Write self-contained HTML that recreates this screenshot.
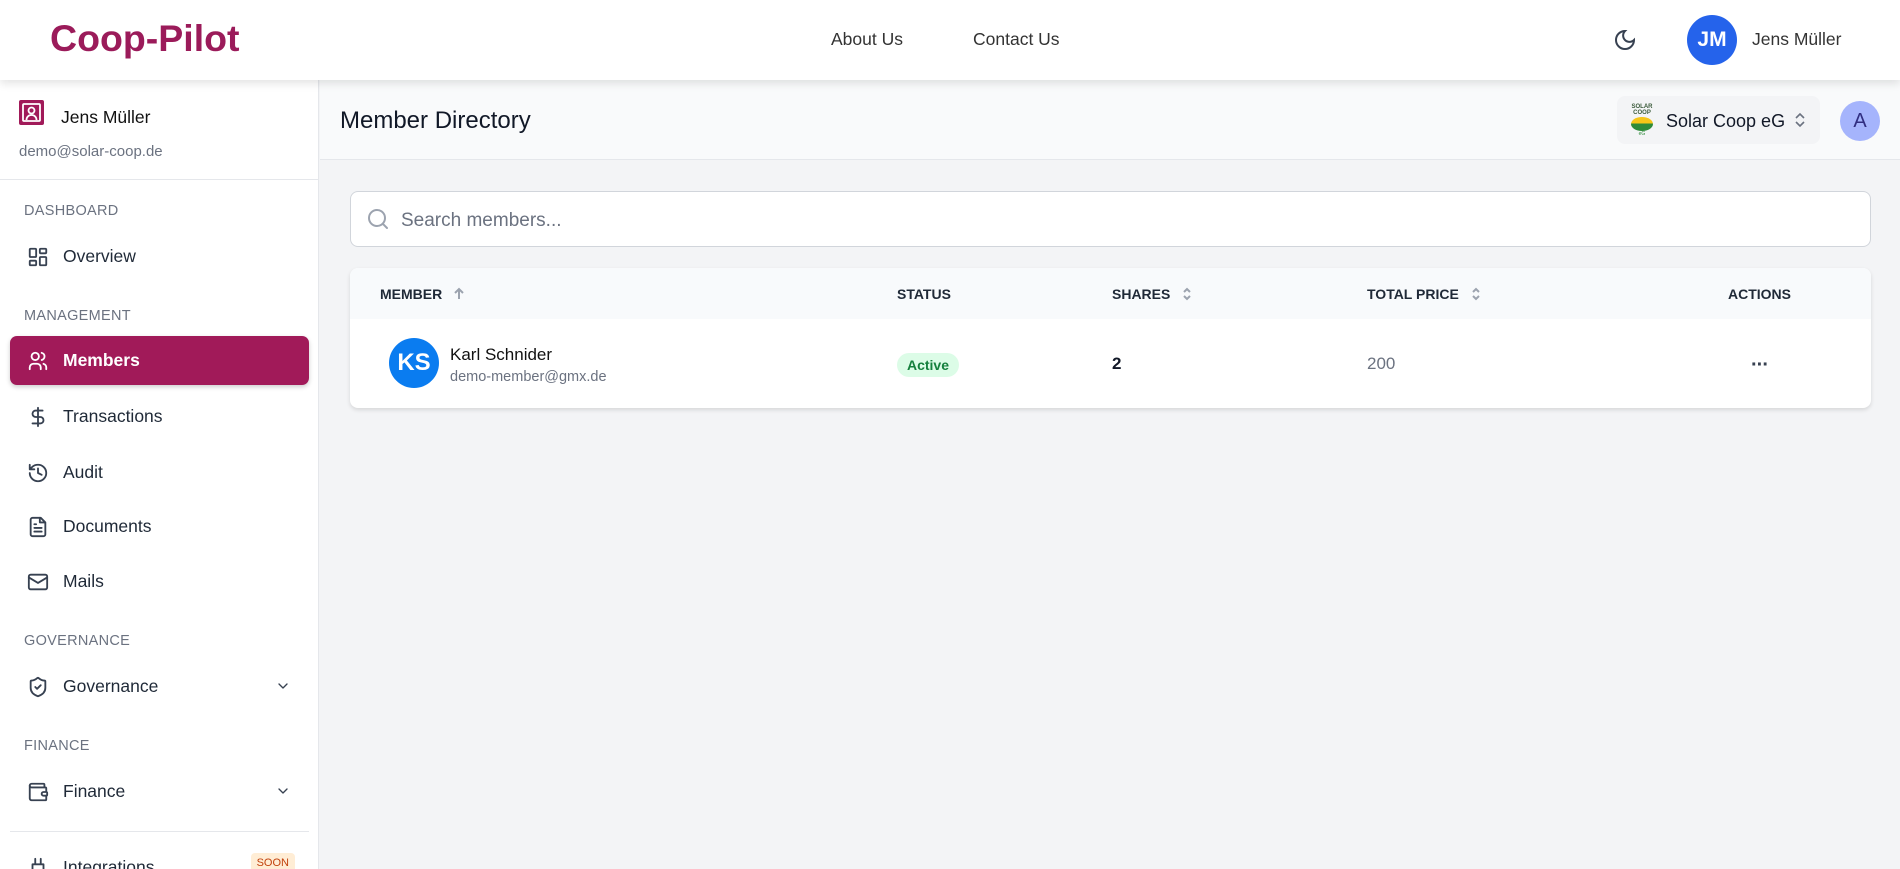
<!DOCTYPE html>
<html><head><meta charset="utf-8"><style>
*{box-sizing:border-box;margin:0;padding:0}
html{width:1900px;height:869px;overflow:hidden}
body{width:1900px;height:869px;overflow:hidden;background:#f3f4f6;font-family:"Liberation Sans",sans-serif;color:#111827;position:relative}
.hdr{position:absolute;left:0;top:0;width:1900px;height:80px;background:#fff;box-shadow:0 4px 8px rgba(0,0,0,.1);z-index:5}
.logo{position:absolute;left:50px;top:17px;font-size:37.5px;font-weight:bold;color:#9b1b5a}
.nav{position:absolute;top:29px;font-size:17.5px;color:#333}
.side{position:absolute;left:0;top:80px;width:319px;height:789px;background:#fff;border-right:1px solid #e5e7eb;overflow:hidden}
.sec{position:absolute;left:24px;font-size:14.5px;color:#6b7280;letter-spacing:.3px}
.item{position:absolute;left:10px;width:299px;height:49px;display:flex;align-items:center;padding-left:17px;font-size:17.5px;color:#1f2937;font-weight:500}
.item svg{width:22px;height:22px;margin-right:14px;fill:none;stroke:#374151;stroke-width:2;stroke-linecap:round;stroke-linejoin:round}
.item.act{background:#a11a59;color:#fff;border-radius:7px;box-shadow:0 2px 5px rgba(0,0,0,.2);font-weight:bold}
.item.act svg{stroke:#fff}
.chev{position:absolute;right:18px;top:16px;width:16px!important;height:16px!important;margin:0!important}
.th{position:absolute;top:286px;font-size:14px;font-weight:bold;color:#1f2937;display:flex;align-items:center;gap:10px}
.th svg{width:14px;height:14px;fill:none;stroke:#9ca3af;stroke-width:2}
</style></head><body>
<div class="hdr">
<div class="logo">Coop-Pilot</div>
<div class="nav" style="left:831px">About Us</div>
<div class="nav" style="left:973px">Contact Us</div>
<svg style="position:absolute;left:1613px;top:28px" width="24" height="24" viewBox="0 0 24 24" fill="none" stroke="#374151" stroke-width="2" stroke-linecap="round"><path d="M12 3a6 6 0 0 0 9 9 9 9 0 1 1-9-9z"/></svg>
<div style="position:absolute;left:1687px;top:15px;width:50px;height:50px;border-radius:50%;background:#2563eb;color:#fff;font-weight:bold;font-size:21px;display:flex;align-items:center;justify-content:center">JM</div>
<div class="nav" style="left:1752px">Jens Müller</div>
</div>
<div class="side">
<div style="position:absolute;left:19px;top:20px;width:25px;height:25px;background:#a11a59;border-radius:2px"><svg width="25" height="25" viewBox="0 0 25 25" fill="none" stroke="#fff" stroke-width="1.8"><rect x="4" y="4" width="17" height="17" rx="1"/><circle cx="12.5" cy="10.5" r="3"/><path d="M7.5 20c0-3 2.2-5 5-5s5 2 5 5"/></svg></div>
<div style="position:absolute;left:61px;top:27px;font-size:17.5px;color:#111">Jens Müller</div>
<div style="position:absolute;left:19px;top:63px;font-size:15px;color:#6b7280">demo@solar-coop.de</div>
<div style="position:absolute;left:0;top:99px;width:319px;height:1px;background:#e5e7eb"></div>
<div class="sec" style="top:123px">DASHBOARD</div>
<div class="item" style="top:152px"><svg viewBox="0 0 24 24"><rect x="3" y="3" width="7" height="9" rx="1"/><rect x="14" y="3" width="7" height="5" rx="1"/><rect x="14" y="12" width="7" height="9" rx="1"/><rect x="3" y="16" width="7" height="5" rx="1"/></svg>Overview</div>
<div class="sec" style="top:228px">MANAGEMENT</div>
<div class="item act" style="top:256px"><svg viewBox="0 0 24 24"><circle cx="9" cy="7" r="4"/><path d="M3 21v-2a4 4 0 0 1 4-4h4a4 4 0 0 1 4 4v2M16 3.1a4 4 0 0 1 0 7.8M21 21v-2a4 4 0 0 0-3-3.9"/></svg>Members</div>
<div class="item" style="top:312px"><svg viewBox="0 0 24 24"><path d="M12 2v20M17 5H9.5a3.5 3.5 0 0 0 0 7h5a3.5 3.5 0 0 1 0 7H6"/></svg>Transactions</div>
<div class="item" style="top:368px"><svg viewBox="0 0 24 24"><path d="M3 12a9 9 0 1 0 9-9 9.7 9.7 0 0 0-6.7 2.7L3 8M3 3v5h5M12 7v5l4 2"/></svg>Audit</div>
<div class="item" style="top:422px"><svg viewBox="0 0 24 24"><path d="M15 2H6a2 2 0 0 0-2 2v16a2 2 0 0 0 2 2h12a2 2 0 0 0 2-2V7z"/><path d="M14 2v5h5M16 13H8M16 17H8M10 9H8"/></svg>Documents</div>
<div class="item" style="top:477px"><svg viewBox="0 0 24 24"><rect x="2" y="4" width="20" height="16" rx="2"/><path d="M22 7l-10 6L2 7"/></svg>Mails</div>
<div class="sec" style="top:553px">GOVERNANCE</div>
<div class="item" style="top:582px"><svg viewBox="0 0 24 24"><path d="M20 13c0 5-3.5 7.5-7.7 9a1 1 0 0 1-.7 0C7.5 20.5 4 18 4 13V6a1 1 0 0 1 1-1c2 0 4.5-1.2 6.2-2.7a1.2 1.2 0 0 1 1.5 0C14.5 3.8 17 5 19 5a1 1 0 0 1 1 1z"/><path d="M9 12l2 2 4-4"/></svg>Governance<svg class="chev" viewBox="0 0 24 24"><path d="M6 9l6 6 6-6"/></svg></div>
<div class="sec" style="top:658px">FINANCE</div>
<div class="item" style="top:687px"><svg viewBox="0 0 24 24"><path d="M19 7V4a1 1 0 0 0-1-1H5a2 2 0 0 0 0 4h15a1 1 0 0 1 1 1v4h-3a2 2 0 0 0 0 4h3a1 1 0 0 0 1-1v-2a1 1 0 0 0-1-1"/><path d="M3 5v14a2 2 0 0 0 2 2h15a1 1 0 0 0 1-1v-4"/></svg>Finance<svg class="chev" viewBox="0 0 24 24"><path d="M6 9l6 6 6-6"/></svg></div>
<div style="position:absolute;left:10px;top:751px;width:299px;height:1px;background:#e5e7eb"></div>
<div class="item" style="top:763px"><svg viewBox="0 0 24 24"><path d="M12 22v-5M9 8V2M15 8V2M18 8v5a4 4 0 0 1-4 4h-4a4 4 0 0 1-4-4V8z"/></svg>Integrations<span style="position:absolute;right:14px;top:10px;background:#ffedd5;color:#c2410c;font-size:11px;padding:4px 6px;border-radius:4px">SOON</span></div>
</div>
<div style="position:absolute;left:320px;top:80px;width:1580px;height:80px;background:#f9fafb;border-bottom:1px solid #e5e7eb"></div>
<div style="position:absolute;left:340px;top:107px;font-size:24px;color:#111827">Member Directory</div>
<div style="position:absolute;left:1617px;top:96px;width:203px;height:48px;background:#f3f4f6;border-radius:8px"></div>
<div style="position:absolute;left:1628px;top:104px;width:28px;height:34px">
<div style="font-size:6px;font-weight:bold;color:#3a5a3a;line-height:6px;text-align:center">SOLAR<br>COOP</div>
<div style="width:22px;height:14px;margin:1px auto 0;border-radius:50%;background:linear-gradient(#f5c518 45%,#2e8b3a 45%)"></div>
<div style="font-size:5px;text-align:center;color:#2e8b3a">eG</div></div>
<div style="position:absolute;left:1666px;top:111px;font-size:18px;color:#111827;font-weight:500">Solar Coop eG</div>
<svg style="position:absolute;left:1792px;top:111px" width="16" height="18" viewBox="0 0 16 18" fill="none" stroke="#6b7280" stroke-width="1.6"><path d="M4 7l4-4 4 4M4 11l4 4 4-4"/></svg>
<div style="position:absolute;left:1840px;top:101px;width:40px;height:40px;border-radius:50%;background:#a5b4fc;color:#312e81;font-size:20px;display:flex;align-items:center;justify-content:center">A</div>
<div style="position:absolute;left:350px;top:191px;width:1521px;height:56px;background:#fff;border:1px solid #d1d5db;border-radius:8px"></div>
<svg style="position:absolute;left:366px;top:207px" width="24" height="24" viewBox="0 0 24 24" fill="none" stroke="#9ca3af" stroke-width="2" stroke-linecap="round"><circle cx="11" cy="11" r="8"/><path d="M21 21l-4.3-4.3"/></svg>
<div style="position:absolute;left:401px;top:210px;font-size:19px;color:#6b7280">Search members...</div>
<div style="position:absolute;left:350px;top:268px;width:1521px;height:140px;background:#fff;border-radius:8px;box-shadow:0 2px 4px rgba(0,0,0,.12);overflow:hidden"><div style="height:51px;background:#f8fafc"></div></div>
<div class="th" style="left:380px">MEMBER<svg viewBox="0 0 14 14"><path d="M7 12V2M3 6l4-4 4 4"/></svg></div>
<div class="th" style="left:897px">STATUS</div>
<div class="th" style="left:1112px">SHARES<svg viewBox="0 0 14 14"><path d="M4 5l3-3 3 3M4 9l3 3 3-3"/></svg></div>
<div class="th" style="left:1367px">TOTAL PRICE<svg viewBox="0 0 14 14"><path d="M4 5l3-3 3 3M4 9l3 3 3-3"/></svg></div>
<div class="th" style="left:1728px">ACTIONS</div>
<div style="position:absolute;left:389px;top:338px;width:50px;height:50px;border-radius:50%;background:#0a7cf0;color:#fff;font-size:24px;font-weight:bold;display:flex;align-items:center;justify-content:center">KS</div>
<div style="position:absolute;left:450px;top:345px;font-size:17px;color:#111">Karl Schnider</div>
<div style="position:absolute;left:450px;top:369px;font-size:14.5px;color:#6b7280">demo-member@gmx.de</div>
<div style="position:absolute;left:897px;top:353px;width:62px;height:24px;border-radius:12px;background:#dcfce7;color:#15803d;font-size:14px;font-weight:bold;display:flex;align-items:center;justify-content:center">Active</div>
<div style="position:absolute;left:1112px;top:354px;font-size:17px;font-weight:bold">2</div>
<div style="position:absolute;left:1367px;top:354px;font-size:17px;color:#6b7280">200</div>
<div style="position:absolute;left:1751px;top:354px;font-size:20px;color:#374151;letter-spacing:-1px;font-weight:bold">···</div>
</body></html>
